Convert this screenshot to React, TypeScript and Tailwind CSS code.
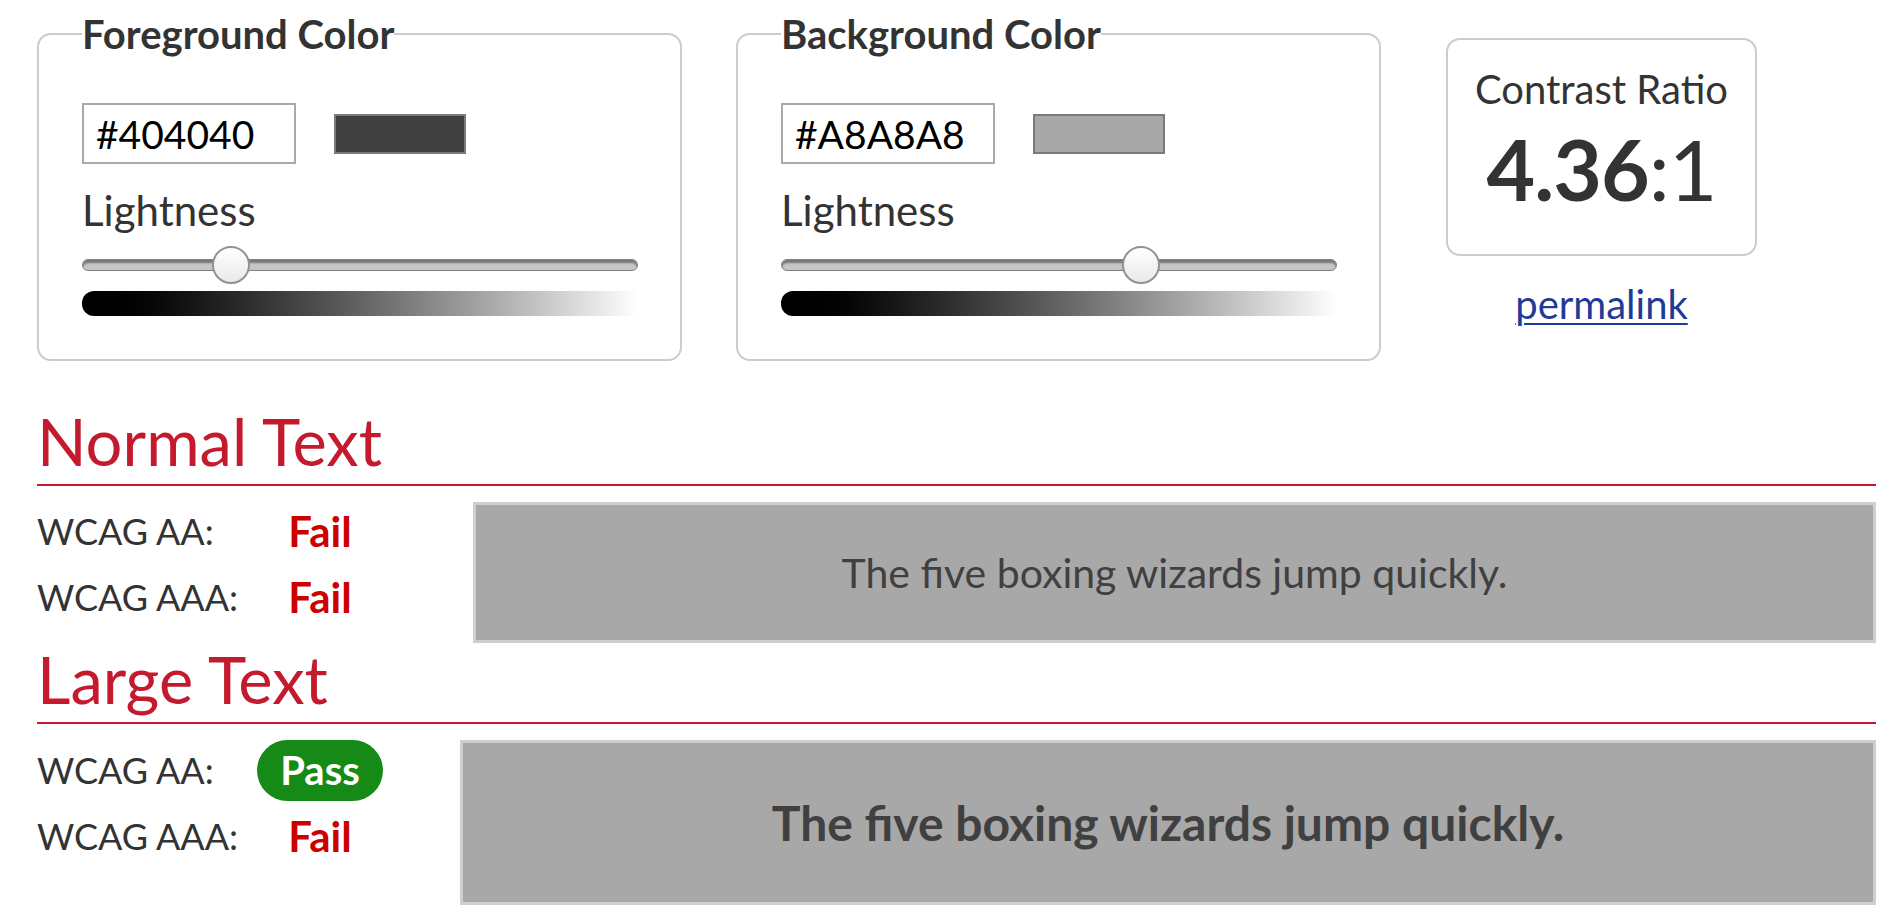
import React from "react";

type PickerProps = { title: string; hex: string; fraction: number };

function ColorPicker({ title, hex, fraction }: PickerProps) {
  const trackWidth = 556;
  const thumb = 38;
  const left = Math.round((trackWidth - thumb) * fraction);
  return (
    <fieldset className="w-[645px] shrink-0 rounded-[14px] border-2 border-[#cccccc] pl-[43px] pr-[42px] pt-[45px] pb-[43px]">
      <legend className="p-0 text-[40px] leading-[48px] font-bold text-[#333333]">{title}</legend>
      <div className="flex items-center">
        <input
          readOnly
          value={hex}
          className="h-[61px] w-[214px] border-2 border-[#a9a9a9] bg-white pl-[12px] text-[39px] leading-[48px] text-black outline-none"
          style={{ fontFamily: "Lato, sans-serif" }}
        />
        <div className="ml-[38px] h-[40px] w-[132px] border-2 border-[#7b7b7b]" style={{ backgroundColor: hex }} />
      </div>
      <div className="mt-[22px] text-[42px] leading-[48px] text-[#333333]">Lightness</div>
      <div className="relative mt-[12px] flex h-[38px] items-center">
        <div className="h-[12px] w-full rounded-full border border-[#808080] bg-[#c6c6c6] shadow-[inset_0_3px_2px_rgba(0,0,0,0.4)]" />
        <div
          className="absolute top-0 h-[38px] w-[38px] rounded-full border-2 border-[#929292] bg-linear-to-b from-white to-[#e9e9e9]"
          style={{ left }}
        />
      </div>
      <div className="mt-[7px] h-[25px] w-full rounded-l-[12px] bg-linear-to-r from-black to-white" />
    </fieldset>
  );
}

function Row({ label, children }: { label: string; children: React.ReactNode }) {
  return (
    <div className="flex h-[66px] items-center">
      <div className="w-[220px] text-[36px] leading-[48px] text-[#333333]">{label}</div>
      <div className="flex w-[126px] justify-center">{children}</div>
    </div>
  );
}

function Fail() {
  return <span className="text-[42px] leading-[48px] font-bold text-[#cc0000]">Fail</span>;
}

function Pass() {
  return (
    <span className="flex h-[61px] w-[126px] items-center justify-center rounded-full bg-[#158a17] text-[40px] leading-[48px] font-bold text-white">
      Pass
    </span>
  );
}

function Heading({ children }: { children: React.ReactNode }) {
  return (
    <div className="border-b-2 border-[#c41a2e] pb-[7px] text-[65px] leading-[72px] text-[#c41a2e]">{children}</div>
  );
}

export default function App() {
  return (
    <div className="min-h-screen bg-white pl-[37px] pr-[19px] pt-[10px] text-[#333333]" style={{ fontFamily: "Lato, 'Open Sans', sans-serif" }}>
      <div className="flex items-start">
        <ColorPicker title="Foreground Color" hex="#404040" fraction={0.251} />
        <div className="ml-[54px]">
          <ColorPicker title="Background Color" hex="#A8A8A8" fraction={0.659} />
        </div>
        <div className="ml-[65px] mt-[28px] flex flex-col items-center">
          <div className="flex h-[218px] w-[311px] flex-col items-center rounded-[14px] border-2 border-[#cccccc] pt-[25px]">
            <div className="text-[40px] leading-[48px] text-[#333333]">Contrast Ratio</div>
            <div className="mt-[6px] text-[84px] leading-[100px] tracking-[-1px] text-[#333333]">
              <span className="font-bold">4.36</span>:1
            </div>
          </div>
          <a
            href="#"
            className="mt-[24px] text-[40px] leading-[48px] text-[#1f3b98] underline decoration-2 underline-offset-[4px]"
          >
            permalink
          </a>
        </div>
      </div>

      <div className="mt-[44px]">
        <Heading>Normal Text</Heading>
        <div className="flex items-start">
          <div className="w-[436px] shrink-0 pt-[12px]">
            <Row label="WCAG AA:">
              <Fail />
            </Row>
            <Row label="WCAG AAA:">
              <Fail />
            </Row>
          </div>
          <div className="mt-[16px] flex h-[141px] flex-1 items-center justify-center border-[3px] border-[#cfcfcf] bg-[#a8a8a8] text-[41px] leading-[48px] text-[#404040]">
            The five boxing wizards jump quickly.
          </div>
        </div>
      </div>

      <div>
        <Heading>Large Text</Heading>
        <div className="flex items-start">
          <div className="w-[423px] shrink-0 pt-[13px]">
            <Row label="WCAG AA:">
              <Pass />
            </Row>
            <Row label="WCAG AAA:">
              <Fail />
            </Row>
          </div>
          <div className="mt-[16px] flex h-[165px] flex-1 items-center justify-center border-[3px] border-[#cfcfcf] bg-[#a8a8a8] text-[48px] leading-[56px] font-bold text-[#404040]">
            The five boxing wizards jump quickly.
          </div>
        </div>
      </div>
    </div>
  );
}
